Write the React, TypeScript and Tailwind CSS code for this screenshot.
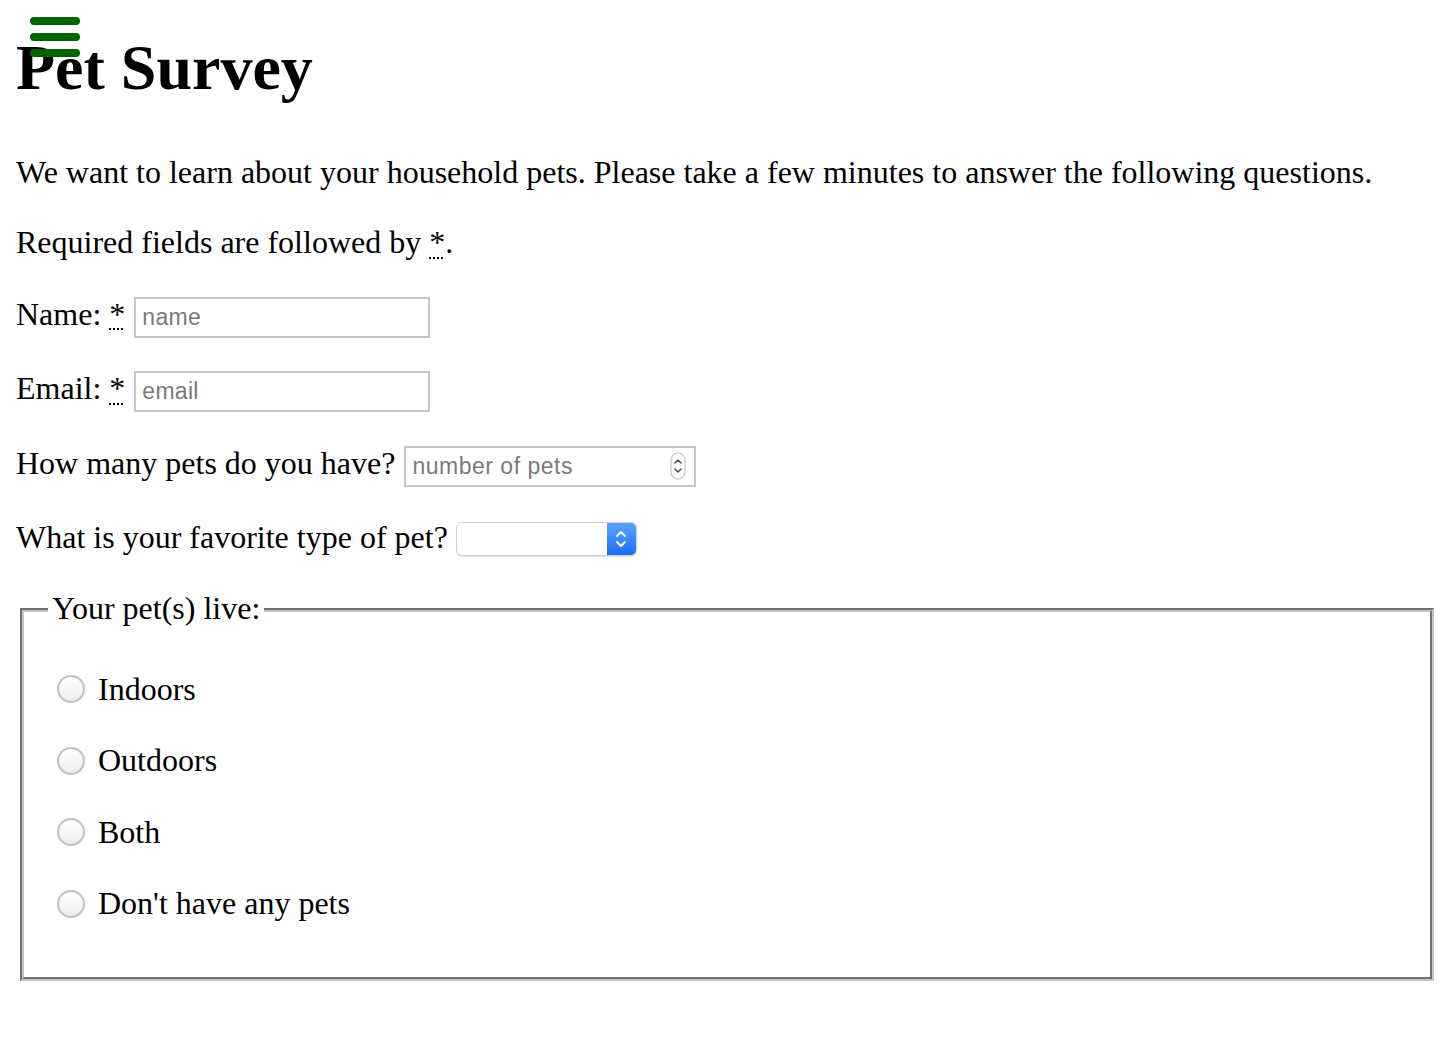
// Pet survey form, drawn at 2x scale of a default browser page
import React from "react";

const serif = "font-['Liberation_Serif','Times_New_Roman',serif]";
const sans = "font-['Liberation_Sans',Arial,sans-serif]";

// Hamburger icon sitting over the title
function MenuIcon() {
   return (
      <div className="absolute left-[30px] top-[17px] flex flex-col gap-[8px]">
         <span className="block h-[8px] w-[50px] rounded-full bg-[#006400]" />
         <span className="block h-[8px] w-[50px] rounded-full bg-[#006400]" />
         <span className="block h-[8px] w-[50px] rounded-full bg-[#006400]" />
      </div>
   );
}

function Req() {
   return (
      <abbr title="required" className="underline decoration-dotted decoration-2 underline-offset-4">
         *
      </abbr>
   );
}

function TextInput({ placeholder }: { placeholder: string }) {
   return (
      <input
         type="text"
         placeholder={placeholder}
         className={`${sans} h-[41px] w-[296px] border-2 border-[#c6c6c6] bg-white px-[6px] text-[23px] tracking-[0.3px] text-black outline-none placeholder:text-[#7a7a7a]`}
      />
   );
}

function NumberInput() {
   return (
      <div className="flex h-[41px] w-[292px] items-center border-2 border-[#c6c6c6] bg-white pr-[8px]">
         <input
            type="text"
            placeholder="number of pets"
            className={`${sans} h-full min-w-0 flex-1 bg-transparent px-[6px] text-[23px] tracking-[0.5px] text-black outline-none placeholder:text-[#7a7a7a]`}
         />
         <svg width="16" height="28" viewBox="0 0 16 28">
            <rect x="1" y="1" width="14" height="26" rx="7" fill="white" stroke="#c4c4c4" strokeWidth="1.2" />
            <path d="M5 11 L8 8 L11 11" fill="none" stroke="#555" strokeWidth="1.6" strokeLinecap="round" strokeLinejoin="round" />
            <path d="M5 17 L8 20 L11 17" fill="none" stroke="#555" strokeWidth="1.6" strokeLinecap="round" strokeLinejoin="round" />
         </svg>
      </div>
   );
}

function SelectBox() {
   return (
      <div className="mt-[3px] flex h-[34px] w-[181px] overflow-hidden rounded-[6px] border border-[#cfcfcf] bg-white shadow-[0_1px_1px_rgba(0,0,0,0.12)]">
         <div className="flex-1" />
         <div className="flex w-[29px] items-center justify-center bg-gradient-to-b from-[#5aa5ff] to-[#1a6cf5]">
            <svg width="14" height="22" viewBox="0 0 14 22">
               <path d="M3 8 L7 4 L11 8" fill="none" stroke="white" strokeWidth="2" strokeLinecap="round" strokeLinejoin="round" />
               <path d="M3 14 L7 18 L11 14" fill="none" stroke="white" strokeWidth="2" strokeLinecap="round" strokeLinejoin="round" />
            </svg>
         </div>
      </div>
   );
}

function Radio({ label, first }: { label: string; first?: boolean }) {
   return (
      <label className={`flex h-[37px] items-center ${first ? "" : "mt-[34.5px]"}`}>
         <span className="ml-[9px] block size-[28px] rounded-full border-2 border-[#c2c2c2] bg-gradient-to-b from-white to-[#efefef] shadow-[inset_0_-1px_1px_rgba(0,0,0,0.06)]" />
         <span className="ml-[13px]">{label}</span>
      </label>
   );
}

export default function App() {
   return (
      <div className={`${serif} relative min-h-[1040px] bg-white px-[16px] text-[32px] leading-[37px] text-black`}>
         <MenuIcon />
         <h1 className="pt-[31px] text-[64px] font-bold leading-[74px]">Pet Survey</h1>
         <p className="mt-[49px]">
            We want to learn about your household pets. Please take a few minutes to answer the following
            questions.
         </p>
         <p className="mt-[33px]">
            Required fields are followed by <Req />.
         </p>

         <div className="mt-[34.5px] flex items-baseline gap-[9px]">
            <label>
               Name: <Req />
            </label>
            <TextInput placeholder="name" />
         </div>
         <div className="mt-[32.5px] flex items-baseline gap-[9px]">
            <label>
               Email: <Req />
            </label>
            <TextInput placeholder="email" />
         </div>
         <div className="mt-[32.5px] flex items-baseline gap-[9px]">
            <label>How many pets do you have?</label>
            <NumberInput />
         </div>
         <div className="mt-[32.7px] flex items-start gap-[8px]">
            <label>What is your favorite type of pet?</label>
            <SelectBox />
         </div>

         <fieldset className="ml-[4px] mr-[2px] mt-[35.5px] border-4 border-[#c4c4c4] px-[24px] pb-[55px] pt-[11px] [border-style:groove]">
            <legend className="-translate-y-[2px] px-[4px]">Your pet(s) live:</legend>
            <div className="mt-[31px]">
               <Radio label="Indoors" first />
               <Radio label="Outdoors" />
               <Radio label="Both" />
               <Radio label="Don't have any pets" />
            </div>
         </fieldset>
      </div>
   );
}
